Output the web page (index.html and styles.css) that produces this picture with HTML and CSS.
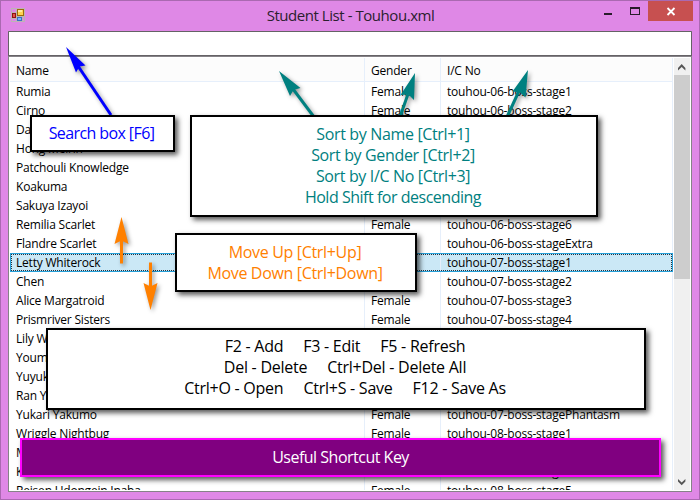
FILE: index.html
```
<!DOCTYPE html>
<html lang="en">
<head>
<meta charset="utf-8">
<title>Student List - Touhou.xml</title>
<link rel="stylesheet" href="styles.css">
</head>
<body>
<div class="window">
  <header class="titlebar">
    <svg class="app-icon" width="14" height="14" viewBox="0 0 14 14">
      <rect width="14" height="14" fill="#bdb4b4"/>
      <path d="M1 1h4v3H1zM1 11h4v2H1zM12 9h1v4h-1z" fill="#df88e6"/>
      <rect x="6.5" y="1.5" width="6" height="6" fill="#ffd351" stroke="#9d6b09"/>
      <path d="M7 2h4v2H7z" fill="#ffeaa0"/>
      <rect x="1.5" y="5.5" width="3" height="4" fill="#e45247" stroke="#8d1515"/>
      <rect x="6.5" y="9.5" width="4" height="3" fill="#79b5ff" stroke="#3a70c4"/>
    </svg>
    <h1 class="title">Student List - Touhou.xml</h1>
    <div class="controls">
      <svg class="control" width="27" height="20" viewBox="0 0 27 20"><path d="M10 12h8v2h-8z" fill="#281c2a"/></svg>
      <svg class="control" width="27" height="20" viewBox="0 0 27 20"><path d="M9 6h10v8H9zM10 8v5h8V8z" fill="#281c2a" fill-rule="evenodd"/></svg>
      <svg class="control close" width="45" height="20" viewBox="0 0 45 20"><path d="M19.500 7l7 7M26.500 7l-7 7" stroke="#fff" stroke-width="1.8"/></svg>
    </div>
  </header>
  <main class="client">
    <div class="search"></div>
    <div class="list">
      <div class="table">
        <div class="row head"><span>Name</span><span>Gender</span><span>I/C No</span></div>
        <div class="row"><span>Rumia</span><span>Female</span><span>touhou-06-boss-stage1</span></div>
        <div class="row"><span>Cirno</span><span>Female</span><span>touhou-06-boss-stage2</span></div>
        <div class="row"><span>Daiyousei</span><span></span><span></span></div>
        <div class="row"><span>Hong Meirin</span><span></span><span></span></div>
        <div class="row"><span>Patchouli Knowledge</span><span></span><span></span></div>
        <div class="row"><span>Koakuma</span><span></span><span></span></div>
        <div class="row"><span>Sakuya Izayoi</span><span></span><span></span></div>
        <div class="row"><span>Remilia Scarlet</span><span>Female</span><span>touhou-06-boss-stage6</span></div>
        <div class="row"><span>Flandre Scarlet</span><span></span><span>touhou-06-boss-stageExtra</span></div>
        <div class="row selected"><span>Letty Whiterock</span><span></span><span>touhou-07-boss-stage1</span></div>
        <div class="row"><span>Chen</span><span></span><span>touhou-07-boss-stage2</span></div>
        <div class="row"><span>Alice Margatroid</span><span>Female</span><span>touhou-07-boss-stage3</span></div>
        <div class="row"><span>Prismriver Sisters</span><span>Female</span><span>touhou-07-boss-stage4</span></div>
        <div class="row"><span>Lily White</span><span></span><span></span></div>
        <div class="row"><span>Youmu Konpaku</span><span></span><span></span></div>
        <div class="row"><span>Yuyuko Saigyouji</span><span></span><span></span></div>
        <div class="row"><span>Ran Yakumo</span><span></span><span></span></div>
        <div class="row"><span>Yukari Yakumo</span><span>Female</span><span>touhou-07-boss-stagePhantasm</span></div>
        <div class="row"><span>Wriggle Nightbug</span><span>Female</span><span>touhou-08-boss-stage1</span></div>
        <div class="row"><span>Mystia Lorelei</span><span></span><span></span></div>
        <div class="row"><span>Keine Kamishirasawa</span><span></span><span>touhou-08-boss-stage3</span></div>
        <div class="row"><span>Reisen Udongein Inaba</span><span>Female</span><span>touhou-08-boss-stage5</span></div>
      </div>
      <div class="scrollbar">
        <svg width="16" height="17" viewBox="0 0 16 17"><path d="M4 10L7.700 6l3.700 4v2.500L7.700 9 4 12.500z" fill="#555"/></svg>
        <div class="thumb"></div>
        <svg class="down" width="16" height="17" viewBox="0 0 16 17"><path d="M4 6L7.700 9.500l3.700-3.500v2.500L7.700 12.200 4 8.500z" fill="#555"/></svg>
      </div>
    </div>
  </main>
</div>

<svg class="arrows" width="700" height="500" viewBox="0 0 700 500">
  <g class="blue"><path class="shaft" d="M78 66L111 115"/><path d="M66 47L85.500 65.500 79.500 66.500 76 72.500z"/></g>
  <g class="teal">
    <path class="shaft" d="M293 89L314 117"/><path d="M279 71L300.500 88 293.500 90 290 96z"/>
    <path class="shaft" d="M408 94L400 117"/><path d="M415 73L400.500 95 408.500 94.500 414 100z"/>
    <path class="shaft" d="M519 91L507 117"/><path d="M528 70L512.500 91.500 520 92.500 525.500 97.500z"/>
  </g>
  <g class="orange">
    <path class="shaft" d="M121.500 239V263.500"/><path d="M121.500 217L128.500 244 121.500 240.500 114.500 244z"/>
    <path class="shaft" d="M150.500 262.500V287"/><path d="M150.500 310L143.500 283 150.500 286.500 157.500 283z"/>
  </g>
</svg>

<div class="note note-search"><p>Search box [F6]</p></div>
<div class="note note-sort">
  <p>Sort by Name [Ctrl+1]</p><p>Sort by Gender [Ctrl+2]</p><p>Sort by I/C No [Ctrl+3]</p><p class="hint">Hold Shift for descending</p>
</div>
<div class="note note-move"><p>Move Up [Ctrl+Up]</p><p>Move Down [Ctrl+Down]</p></div>
<div class="note note-keys">
  <p><span>F2 - Add</span><span>F3 - Edit</span><span>F5 - Refresh</span></p>
  <p><span>Del - Delete</span><span>Ctrl+Del - Delete All</span></p>
  <p><span>Ctrl+O - Open</span><span>Ctrl+S - Save</span><span>F12 - Save As</span></p>
</div>
<div class="note note-heading"><p>Useful Shortcut Key</p></div>
</body>
</html>
```
FILE: styles.css
```
* { box-sizing: border-box; }
body { margin: 0; width: 700px; height: 500px; overflow: hidden; font-family: "Open Sans", "Noto Sans", sans-serif; }
h1, p { margin: 0; font-weight: 400; }

.window { width: 700px; height: 500px; padding: 0 7px 7px; display: flex; flex-direction: column; background: #df88e6; border: 1px solid #aa69b1; }
.titlebar { height: 30px; flex: none; display: flex; align-items: flex-start; }
.app-icon { flex: none; margin: 7px 0 0 3px; }
.title { flex: 1; margin-left: 82px; text-align: center; font-size: 15px; line-height: 29px; letter-spacing: -0.45px; color: #2b202e; white-space: nowrap; }
.controls { display: flex; margin-right: -1px; }
.control { display: block; }
.close { background: #c75050; }

.client { flex: 1; min-height: 0; display: flex; flex-direction: column; border: 1px solid #858287; border-top-color: #656266; background: #fff; }
.search { height: 24px; flex: none; margin: 0 -1px; border: 1px solid #656266; border-top-width: 0; }
.list { flex: 1; min-height: 0; display: flex; padding: 1px; border-top: 1px solid #858287; }
.table { flex: 1; min-width: 0; overflow: hidden; font-size: 12px; letter-spacing: -0.2px; color: #000; }
.row { display: grid; grid-template-columns: 355px 76px 1fr; height: 19px; line-height: 19px; white-space: nowrap; margin-right: 1px; }
.row span { padding-left: 6px; border-right: 1px solid #e6effb; }
.head { height: 24px; line-height: 25px; background: #fcfcfc; border-bottom: 1px solid #e6effb; }
.selected { position: relative; background: #cbe8f6; outline: 1px solid #26a0da; outline-offset: -1px; }
.selected::after { content: ""; position: absolute; inset: 1px; border: 1px dotted #26303a; }
.scrollbar { width: 16px; flex: none; display: flex; flex-direction: column; background: #f0f0f0; }
.scrollbar svg { flex: none; }
.thumb { height: 204px; background: #cdcdcd; }
.down { margin-top: auto; }

.arrows { position: absolute; left: 0; top: 0; filter: drop-shadow(2px 2px 2px rgba(0, 0, 0, .4)); }
.shaft { stroke-width: 3; fill: none; }
.blue { fill: #00f; }
.blue .shaft { stroke: #00f; }
.teal { fill: #008080; }
.teal .shaft { stroke: #008080; }
.orange { fill: #ff8000; }
.orange .shaft { stroke: #ff8000; }

.note { position: absolute; display: flex; flex-direction: column; justify-content: center; align-items: center; background: #fff; border: 2px solid #000; box-shadow: 3px 3px 5px rgba(0, 0, 0, .65); font-size: 16px; line-height: 21px; white-space: nowrap; }
.note-search { left: 30px; top: 115px; width: 145px; height: 37px; padding-right: 2px; color: #00f; letter-spacing: -0.6px; }
.note-sort { left: 190px; top: 115px; width: 408px; height: 102px; padding-right: 2px; color: #008080; letter-spacing: -0.35px; }
.hint { letter-spacing: -0.48px; }
.note-move { left: 175px; top: 233px; width: 242px; height: 59px; padding-right: 2px; color: #ff8000; letter-spacing: -0.33px; }
.note-keys { left: 46px; top: 328px; width: 600px; height: 82px; padding: 0 2px 4px 0; color: #000; letter-spacing: -0.25px; }
.note-keys p { display: flex; gap: 20px; }
.note-heading { left: 20px; top: 438px; width: 641px; height: 39px; color: #fff; background: #800080; border-color: #f0f; letter-spacing: -0.5px; }
```
